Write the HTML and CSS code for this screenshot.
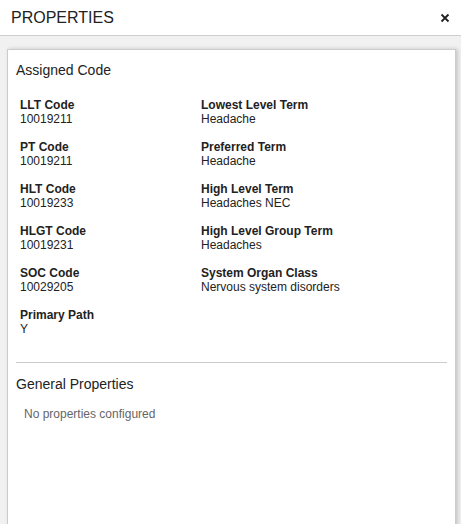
FILE: index.html
```html
<!DOCTYPE html>
<html lang="en">
<head>
<meta charset="utf-8">
<title>Properties</title>
<link rel="stylesheet" href="styles.css">
</head>
<body>
<header class="header">
  <h1 class="header-title">PROPERTIES</h1>
  <button class="close-btn" aria-label="Close">
    <svg width="10" height="10" viewBox="0 0 10 10"><path d="M1.5 1.5 L8.5 8.5 M8.5 1.5 L1.5 8.5" stroke="#222" stroke-width="1.8" fill="none"/></svg>
  </button>
</header>
<main class="content">
  <section class="panel">
    <h2 class="section-title">Assigned Code</h2>
    <div class="fields">
      <div class="field"><div class="field-label">LLT Code</div><div class="field-value">10019211</div></div>
      <div class="field"><div class="field-label">Lowest Level Term</div><div class="field-value">Headache</div></div>
      <div class="field"><div class="field-label">PT Code</div><div class="field-value">10019211</div></div>
      <div class="field"><div class="field-label">Preferred Term</div><div class="field-value">Headache</div></div>
      <div class="field"><div class="field-label">HLT Code</div><div class="field-value">10019233</div></div>
      <div class="field"><div class="field-label">High Level Term</div><div class="field-value">Headaches NEC</div></div>
      <div class="field"><div class="field-label">HLGT Code</div><div class="field-value">10019231</div></div>
      <div class="field"><div class="field-label">High Level Group Term</div><div class="field-value">Headaches</div></div>
      <div class="field"><div class="field-label">SOC Code</div><div class="field-value">10029205</div></div>
      <div class="field"><div class="field-label">System Organ Class</div><div class="field-value">Nervous system disorders</div></div>
      <div class="field"><div class="field-label">Primary Path</div><div class="field-value">Y</div></div>
    </div>
    <hr class="divider">
    <h2 class="section-title section-title-general">General Properties</h2>
    <p class="empty-note">No properties configured</p>
  </section>
</main>
</body>
</html>
```
FILE: styles.css
```css
html, body {
  margin: 0;
  padding: 0;
  height: 100%;
  overflow: hidden;
}
body {
  font-family: "Liberation Sans", Arial, sans-serif;
  color: #222;
  background: #f1f1f1;
}
.header {
  height: 35px;
  border-bottom: 1px solid #cfcfcf;
  background: #fff;
  display: flex;
  align-items: center;
  justify-content: space-between;
  padding: 0 11px 0 11px;
}
.header-title {
  margin: 0;
  font-size: 16px;
  font-weight: normal;
  line-height: 35px;
  color: #222;
}
.close-btn {
  border: 0;
  background: none;
  padding: 0;
  width: 10px;
  height: 10px;
  display: flex;
  margin-top: 1px;
}
.content {
  padding: 13px 5px 0 7px;
}
.panel {
  background: #fff;
  border: 1px solid #cccccc;
  box-shadow: 2px 0 4px rgba(0, 0, 0, 0.18);
  min-height: 600px;
  padding: 12px 8px 0 8px;
}
.section-title {
  margin: 0;
  font-size: 14px;
  font-weight: normal;
  line-height: 16px;
  color: #222;
}
.fields {
  display: grid;
  grid-template-columns: 181px 1fr;
  row-gap: 14px;
  padding-left: 4px;
  margin-top: 20px;
}
.field-label {
  font-size: 12px;
  line-height: 14px;
  font-weight: bold;
}
.field-value {
  font-size: 12px;
  line-height: 14px;
}
.divider {
  border: 0;
  border-top: 1px solid #cccccc;
  margin: 26px 0 0 0;
  height: 0;
}
.section-title-general {
  margin-top: 13px;
}
.empty-note {
  margin: 15px 0 0 8px;
  font-size: 12px;
  line-height: 14px;
  color: #666;
}
```
